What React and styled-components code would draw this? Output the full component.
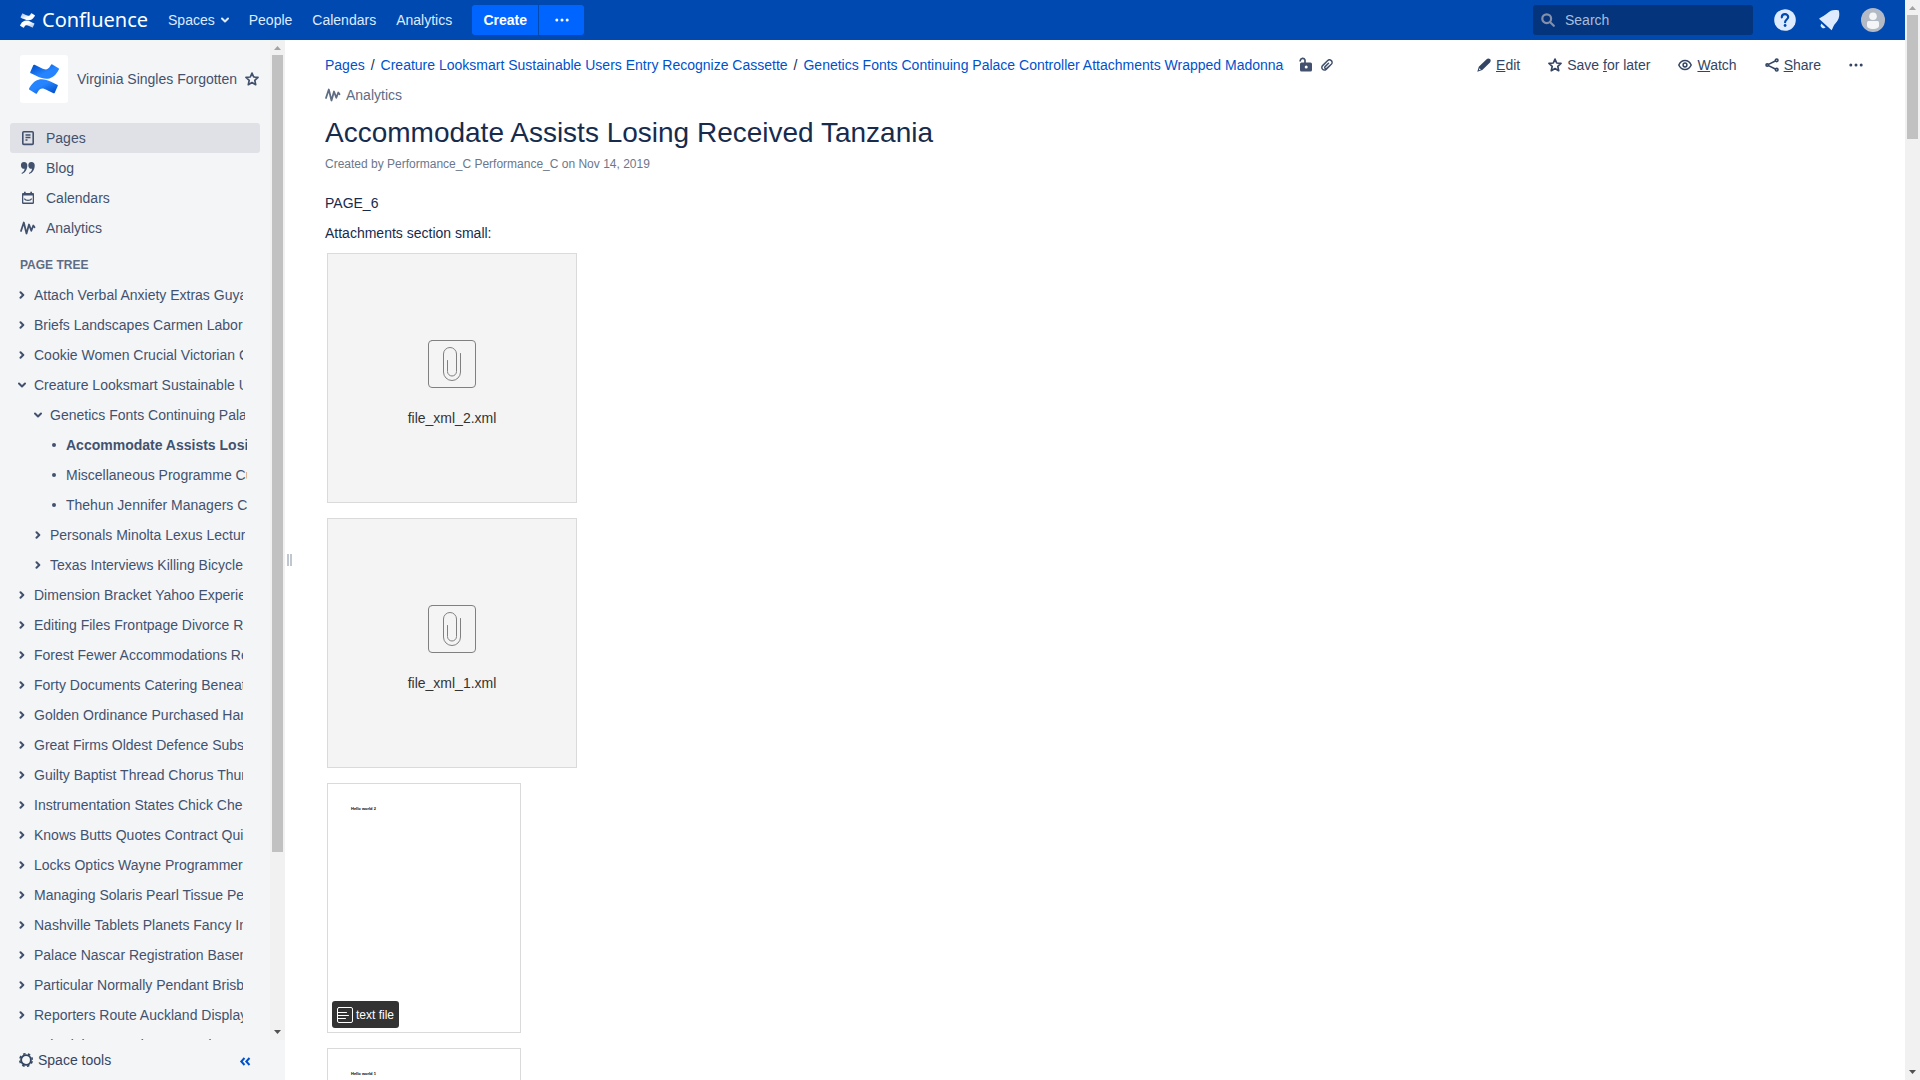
import React from "react";
import styled, { createGlobalStyle } from "styled-components";

const GlobalStyle = createGlobalStyle`
  *, *::before, *::after { box-sizing: border-box; }
  body {
    margin: 0;
    overflow: hidden;
    background: #fff;
    color: #172b4d;
    font: 14px/20px "Liberation Sans", Arial, sans-serif;
  }
  h1, h2, p, ul { margin: 0; padding: 0; }
  ul { list-style: none; }
  a { color: inherit; text-decoration: none; }
  button, input { font: inherit; }
  button { border: 0; padding: 0; background: none; color: inherit; cursor: pointer; }
  svg { display: block; flex: none; }
`;

/* ---------- shell ---------- */

const Viewport = styled.div`
  display: flex;
  height: 100vh;
`;

const Page = styled.div`
  flex: 1;
  min-width: 0;
  display: flex;
  flex-direction: column;
`;

const Body = styled.div`
  flex: 1;
  min-height: 0;
  display: flex;
`;

/* ---------- scrollbar ---------- */

const Track = styled.div`
  flex: none;
  display: flex;
  flex-direction: column;
  align-items: center;
  width: 15px;
  background: #f1f1f1;
`;

const Thumb = styled.div`
  width: 11px;
  flex: 0 0 ${(p) => p.$size};
  background: #c1c1c1;
`;

const TrackSpace = styled.div`
  flex: 1;
`;

const Arrow = ({ down }) => (
  <svg width="15" height="15" viewBox="0 0 15 15">
    <path d={down ? "M4 5h7L7.500 9z" : "M4 10h7L7.500 6z"} fill={down ? "#505050" : "#a3a3a3"} />
  </svg>
);

const Scrollbar = ({ size }) => (
  <Track aria-hidden="true">
    <Arrow />
    <Thumb $size={size} />
    <TrackSpace />
    <Arrow down />
  </Track>
);

/* ---------- header ---------- */

const Header = styled.header`
  flex: none;
  display: flex;
  align-items: center;
  justify-content: space-between;
  height: 40px;
  padding: 0 20px;
  background: #0049b0;
  color: #deebff;
`;

const HeaderGroup = styled.div`
  display: flex;
  align-items: center;
  gap: 20px;
`;

const Brand = styled.a`
  display: flex;
  align-items: center;
  gap: 7px;
  color: #fff;
  font: 20px/30px "Noto Sans", "Open Sans", sans-serif;
`;

const NavLink = styled.a`
  display: flex;
  align-items: center;
  gap: 6px;
`;

const CreateGroup = styled.div`
  display: flex;
  gap: 1px;
`;

const CreateButton = styled.button`
  display: flex;
  align-items: center;
  justify-content: center;
  width: ${(p) => (p.$more ? "45px" : "66px")};
  height: 30px;
  border-radius: ${(p) => (p.$more ? "0 3px 3px 0" : "3px 0 0 3px")};
  background: #0065ff;
  color: #fff;
  font-weight: bold;
`;

const SearchBox = styled.label`
  display: flex;
  align-items: center;
  gap: 10px;
  width: 220px;
  height: 30px;
  padding: 0 8px;
  border-radius: 3px;
  background: #04347c;
  color: #8590a8;
`;

const SearchInput = styled.input`
  flex: 1;
  min-width: 0;
  padding: 0;
  border: 0;
  outline: 0;
  background: none;
  color: #deebff;
  &::placeholder { color: #a9bddb; opacity: 1; }
`;

const IconButton = styled.button`
  display: flex;
  align-items: center;
  justify-content: center;
  width: 24px;
  height: 24px;
`;

/* ---------- sidebar ---------- */

const Sidebar = styled.aside`
  flex: none;
  display: flex;
  flex-direction: column;
  width: 285px;
  background: #f4f5f7;
  color: #42526e;
`;

const SidebarScroll = styled.div`
  flex: 1;
  min-height: 0;
  display: flex;
`;

const SidebarContent = styled.div`
  flex: 1;
  min-width: 0;
  overflow: hidden;
`;

const Space = styled.div`
  display: flex;
  align-items: center;
  padding: 15px 11px 20px 20px;
`;

const SpaceLogo = styled.a`
  display: flex;
  align-items: center;
  justify-content: center;
  width: 48px;
  height: 48px;
  margin-right: 9px;
  border-radius: 3px;
  background: #fff;
`;

const SpaceName = styled.a`
  flex: 1;
  white-space: nowrap;
`;

const SideNav = styled.ul`
  padding: 0 10px;
`;

const SideLink = styled.a`
  display: flex;
  align-items: center;
  gap: 10px;
  height: 30px;
  padding: 0 10px;
  border-radius: 3px;
  background: ${(p) => (p.$active ? "#dfe1e6" : "transparent")};
`;

const TreeTitle = styled.h2`
  padding: 8px 20px 0;
  color: #5e6c84;
  font-size: 12px;
  line-height: 29px;
  text-transform: uppercase;
`;

const TreeRow = styled.li`
  display: flex;
  align-items: center;
  gap: 6px;
  height: 30px;
  padding-left: ${(p) => 16 + p.$level * 16}px;
  padding-right: ${(p) => 27 - p.$level * 2}px;
`;

const Toggle = styled.button`
  flex: none;
  display: flex;
  justify-content: center;
  width: 12px;
`;

const Bullet = styled.span`
  flex: none;
  width: 4px;
  height: 4px;
  margin: 0 4px;
  border-radius: 2px;
  background: #42526e;
`;

const TreeLink = styled.a`
  min-width: 0;
  overflow: hidden;
  white-space: nowrap;
  font-weight: ${(p) => (p.$current ? "bold" : "normal")};
`;

const SidebarFooter = styled.div`
  flex: none;
  display: flex;
  align-items: center;
  justify-content: space-between;
  height: 40px;
  padding: 0 34px 0 19px;
`;

const FooterButton = styled.button`
  display: flex;
  align-items: center;
  gap: 5px;
  color: ${(p) => (p.$accent ? "#0052cc" : "#344563")};
`;

const Splitter = styled.div`
  flex: none;
  display: flex;
  align-items: center;
  justify-content: center;
  width: 8px;
`;

const Grip = styled.div`
  width: 5px;
  height: 12px;
  border: solid #c1c7d0;
  border-width: 0 2px;
`;

/* ---------- content ---------- */

const Main = styled.main`
  flex: 1;
  min-width: 0;
  overflow: hidden;
  padding: 10px 42px 0 32px;
`;

const TopRow = styled.div`
  display: flex;
  justify-content: space-between;
`;

const Meta = styled.div`
  display: flex;
  align-items: center;
  height: 30px;
`;

const Crumbs = styled.nav`
  display: flex;
  gap: 6px;
  margin-right: 16px;
  color: #172b4d;
  a { color: #0052cc; }
`;

const MetaIcons = styled.div`
  display: flex;
  align-items: center;
  gap: 8px;
  color: #42526e;
`;

const AnalyticsLink = styled.a`
  display: flex;
  align-items: center;
  gap: 5px;
  height: 30px;
  color: #5e6c84;
`;

const Toolbar = styled.div`
  display: flex;
  align-items: center;
  gap: 28px;
  height: 30px;
  color: #344563;
`;

const ToolButton = styled.button`
  display: flex;
  align-items: center;
  gap: 5px;
`;

const Title = styled.h1`
  margin-top: 7px;
  font-size: 28px;
  font-weight: normal;
  line-height: 32px;
`;

const Byline = styled.p`
  margin: 5px 0 19px;
  color: #6b778c;
  font-size: 12px;
`;

const Paragraph = styled.p`
  margin-bottom: 10px;
`;

const Files = styled.div`
  display: flex;
  flex-direction: column;
  align-items: flex-start;
  gap: 15px;
  padding-left: 2px;
`;

const FileCard = styled.a`
  flex: none;
  display: flex;
  flex-direction: column;
  align-items: center;
  gap: 20px;
  width: 250px;
  height: 250px;
  padding-top: 86px;
  border: 1px solid #dadada;
  background: #f4f4f4;
  color: #333;
`;

const PreviewCard = styled.a`
  flex: none;
  display: flex;
  flex-direction: column;
  align-items: flex-start;
  justify-content: space-between;
  width: 194px;
  height: 250px;
  padding: 22px 4px 4px;
  border: 1px solid #dadada;
  background: #fff;
`;

const PreviewText = styled.span`
  padding-left: 19px;
  color: #000;
  font-size: 4px;
  font-weight: bold;
  line-height: 5px;
`;

const FileBadge = styled.span`
  display: flex;
  align-items: center;
  gap: 3px;
  height: 27px;
  padding: 0 5px;
  border-radius: 3px;
  background: #333;
  color: #fff;
  font-size: 12px;
`;

/* ---------- icons ---------- */

const RIBBON_LOW =
  "M.87 18.257c-.248.382-.53.875-.763 1.245a.764.764 0 0 0 .255 1.04l4.965 3.054a.764.764 0 0 0 1.058-.26c.199-.332.454-.763.733-1.221 1.967-3.247 3.945-2.853 7.508-1.146l4.957 2.337a.764.764 0 0 0 1.028-.382l2.364-5.346a.764.764 0 0 0-.382-1 599.851 599.851 0 0 1-4.965-2.361C10.911 10.97 5.224 11.185.87 18.257z";
const RIBBON_HIGH =
  "M23.131 5.743c.249-.405.531-.875.764-1.25a.764.764 0 0 0-.256-1.034L18.675.404a.764.764 0 0 0-1.058.26c-.195.335-.451.763-.734 1.225-1.966 3.246-3.945 2.85-7.508 1.146L4.437.694a.764.764 0 0 0-1.027.382L1.046 6.422a.764.764 0 0 0 .382 1c1.039.49 3.105 1.467 4.965 2.361 6.698 3.246 12.392 3.029 16.738-4.04z";

const ConfluenceMark = ({ size, id, from, to }) => (
  <svg width={size} height={size} viewBox="0 0 24 24">
    <defs>
      <linearGradient id={`${id}-low`} x1="1" y1="1" x2="0.2" y2="0.2">
        <stop offset="0.100" stopColor={from} />
        <stop offset="0.700" stopColor={to} />
      </linearGradient>
      <linearGradient id={`${id}-high`} x1="0" y1="0" x2="0.8" y2="0.8">
        <stop offset="0.100" stopColor={from} />
        <stop offset="0.700" stopColor={to} />
      </linearGradient>
    </defs>
    <path d={RIBBON_LOW} fill={`url(#${id}-low)`} />
    <path d={RIBBON_HIGH} fill={`url(#${id}-high)`} />
  </svg>
);

const Line = ({ w = 16, h = 16, sw = 2, children, ...rest }) => (
  <svg
    width={w}
    height={h}
    viewBox={`0 0 ${w} ${h}`}
    fill="none"
    stroke="currentColor"
    strokeWidth={sw}
    strokeLinecap="round"
    strokeLinejoin="round"
    {...rest}
  >
    {children}
  </svg>
);

const ChevronDown = () => (
  <Line w={8} h={8}><path d="M1 2.500 4 5.500 7 2.500" /></Line>
);
const ChevronRight = () => (
  <Line w={8} h={8}><path d="M2.500 1.200 5.300 4 2.500 6.800" /></Line>
);
const Dots = ({ w = 14, r = 1.5 }) => (
  <svg width={w} height="4" viewBox={`0 0 ${w} 4`} fill="currentColor">
    <circle cx={r + 0.3} cy="2" r={r} />
    <circle cx={w / 2} cy="2" r={r} />
    <circle cx={w - r - 0.3} cy="2" r={r} />
  </svg>
);
const Star = ({ size = 14 }) => (
  <svg width={size} height={size} viewBox="0 0 14 14" fill="none" stroke="currentColor" strokeWidth="1.700" strokeLinejoin="round">
    <path d="M7 1.100 8.700 5l4.300.4-3.200 2.900.9 4.400L7 10.500l-3.700 2.200.9-4.400L1 5.400 5.300 5z" />
  </svg>
);
const Pulse = ({ w = 16 }) => (
  <Line w={w} h={14} sw={1.8}><path d="M1 10 3.800 1.500 6.500 12.500 9 3.500l2.300 6.300 2-5.300 1.200 1.700" /></Line>
);
const SearchIcon = () => (
  <Line w={14} h={14} sw={2.2}><circle cx="5.700" cy="5.700" r="4.400" /><path d="m9.200 9.200 3.600 3.600" /></Line>
);
const HelpIcon = () => (
  <svg width="22" height="22" viewBox="0 0 22 22" fill="none">
    <circle cx="11" cy="11" r="10.800" fill="#deebff" />
    <path d="M7.800 8.300C7.900 6.300 9.200 5.200 11 5.200s3.200 1.100 3.200 2.900c0 2.300-3.100 2.500-3.100 5.100" stroke="#0049b0" strokeWidth="2.200" strokeLinecap="round" />
    <circle cx="11.100" cy="16.500" r="1.400" fill="#0049b0" />
  </svg>
);
const BellIcon = () => (
  <svg width="22" height="22" viewBox="0 0 22 22" fill="#deebff">
    <path d="M1 9.800C3 8 7 6.600 9.300 4.300 11.800 1.600 15 .5 18.800 1L20.900 1.600 21.300 4.500c.2 3.400-.8 6.800-3.500 9.400-2.400 2.400-3 5.300-4.200 7.300z" />
    <path d="M3.300 14.500 7.600 18.600A3 3 0 0 1 3.300 14.500z" />
  </svg>
);
const AvatarIcon = () => (
  <svg width="24" height="24" viewBox="0 0 24 24">
    <circle cx="12" cy="12" r="12" fill="#b3bac5" />
    <circle cx="12" cy="8.300" r="3.800" fill="#f4f5f7" />
    <path d="M6 14.500A1.500 1.500 0 0 1 7.500 13h9a1.500 1.500 0 0 1 1.500 1.500v3.300c0 2-2.600 3.200-6 3.200s-6-1.200-6-3.200z" fill="#f4f5f7" />
  </svg>
);
const PageIcon = () => (
  <Line sw={1.6} h={16}><rect x="2.800" y="1.800" width="10.400" height="12.600" rx="1" /><path d="M5.500 5h5M5.500 7.500h5M5.500 10h2" strokeWidth="1.300" strokeLinecap="butt" /></Line>
);
const QuoteIcon = () => (
  <svg width="16" height="16" viewBox="0 0 16 16" fill="currentColor">
    <path d="M4 2a3.200 3.200 0 0 1 3.300 3.600C7.300 9.500 5.300 12.800 2 14l-.5-1c2-.9 3-2.600 3.100-4.300A3.300 3.300 0 1 1 4 2z" />
    <path d="M11.400 2a3.200 3.200 0 0 1 3.300 3.600c0 3.900-2 7.200-5.300 8.400l-.5-1c2-.9 3-2.600 3.100-4.300A3.300 3.300 0 1 1 11.400 2z" />
  </svg>
);
const CalendarIcon = () => (
  <svg width="16" height="16" viewBox="0 0 16 16">
    <path d="M2 4.200C2 3.300 2.500 3 3 3h1V1.800h1.700V3h4.600V1.800H12V3h1c.6 0 1 .4 1 1.200v8.600c0 .7-.4 1.200-1 1.200H3c-.6 0-1-.5-1-1.200zM3.300 5.600v7h9.400v-7z" fill="currentColor" fillRule="evenodd" />
    <path d="M4.300 8.600c1.400 2.400 6 2.400 7.400 0" fill="none" stroke="currentColor" strokeWidth="1.200" />
  </svg>
);
const GearIcon = () => (
  <svg width="14" height="14" viewBox="0 0 14 14" fill="none" stroke="currentColor">
    <circle cx="7" cy="7" r="4.900" strokeWidth="1.900" />
    <circle cx="7" cy="7" r="6.300" strokeWidth="1.500" strokeDasharray="2.500 2.448" strokeDashoffset="-1.200" />
  </svg>
);
const CollapseIcon = () => (
  <Line w={12} h={12} sw={2} strokeLinecap="butt" strokeLinejoin="miter"><path d="M5.500 4 2.300 7.500 5.500 11M10.500 4 7.300 7.500 10.500 11" /></Line>
);
const LockIcon = () => (
  <svg width="14" height="16" viewBox="0 0 14 16">
    <path d="M1.200 4.500V3.600A2.500 2.500 0 0 1 6 3V6" fill="none" stroke="currentColor" strokeWidth="1.700" />
    <path d="M2.500 5.500h9A1.500 1.500 0 0 1 13 7v6a1.500 1.500 0 0 1-1.500 1.500h-9A1.500 1.500 0 0 1 1 13V7A1.500 1.500 0 0 1 2.500 5.500zM7.200 8.500a1.500 1.500 0 1 0 0 3 1.500 1.500 0 0 0 0-3z" fill="currentColor" fillRule="evenodd" />
  </svg>
);
const ClipIcon = () => (
  <Line w={12} h={12} sw={1.5}><path d="m9.300 6.200-4.200 4.200a2.400 2.400 0 0 1-3.500-.1C.5 9.200.6 7.600 1.600 6.600L6.500 1.700c1.100-1.100 2.700-1.200 3.800-.1 1.100 1.100 1 2.700 0 3.700L5.800 9.200c-.6.600-1.400.5-1.800.1s-.4-1.200.1-1.700L7.500 4.300" /></Line>
);
const PencilIcon = () => (
  <svg width="14" height="14" viewBox="0 0 14 14" fill="currentColor">
    <path d="M9.600 1.200C10.500.2 12 .2 13 1.100s.9 2.300 0 3.300l-7.700 7.700L.3 13.700l1.500-4.900zM2.500 10.200l-.7 2.100 2.100-.7z" fillRule="evenodd" />
  </svg>
);
const EyeIcon = () => (
  <Line w={14} h={14} sw={1.5}><path d="M.8 7c2.700-6 9.700-6 12.400 0-2.700 6-9.700 6-12.400 0z" /><circle cx="7" cy="7" r="1.900" /></Line>
);
const ShareIcon = () => (
  <Line w={14} h={14} sw={1.6}><circle cx="2.200" cy="7" r="1.200" /><circle cx="11.700" cy="2.300" r="1.300" /><circle cx="11.700" cy="11.700" r="1.300" /><path d="M3.500 6.400 10.300 3M3.500 7.600l6.800 3.400" /></Line>
);
const AttachmentIcon = () => (
  <Line w={48} h={48} sw={1} stroke="#808080">
    <rect x="0.500" y="0.500" width="47" height="47" rx="3.500" />
    <path d="M32.500 13.500v18.500a8.500 8.500 0 0 1-17 0V14a6.500 6.500 0 0 1 13 0v17.500a4.500 4.500 0 0 1-9 0V20.500" />
  </Line>
);
const TextFileIcon = () => (
  <Line w={16} h={16} sw={1} stroke="#fff"><rect x="0.500" y="0.500" width="15" height="15" rx="1.500" /><path d="M1 5.500h8.500M1 8.500h10.500M1 11.500h7.500" /></Line>
);

/* ---------- data ---------- */

const sideLinks = [
  { label: "Pages", icon: <PageIcon />, active: true },
  { label: "Blog", icon: <QuoteIcon /> },
  { label: "Calendars", icon: <CalendarIcon /> },
  { label: "Analytics", icon: <Pulse /> },
];

const tree = [
  ["Attach Verbal Anxiety Extras Guyana"],
  ["Briefs Landscapes Carmen Labor"],
  ["Cookie Women Crucial Victorian Cups"],
  ["Creature Looksmart Sustainable Users Entry Recognize Cassette", 0, "open"],
  ["Genetics Fonts Continuing Palace Controller Attachments Wrapped Madonna", 1, "open"],
  ["Accommodate Assists Losing Received Tanzania", 2, "current"],
  ["Miscellaneous Programme Cups", 2, "leaf"],
  ["Thehun Jennifer Managers Carmen", 2, "leaf"],
  ["Personals Minolta Lexus Lecture", 1],
  ["Texas Interviews Killing Bicycle", 1],
  ["Dimension Bracket Yahoo Experience"],
  ["Editing Files Frontpage Divorce R"],
  ["Forest Fewer Accommodations Report"],
  ["Forty Documents Catering Beneath"],
  ["Golden Ordinance Purchased Harry"],
  ["Great Firms Oldest Defence Subs"],
  ["Guilty Baptist Thread Chorus Thunder"],
  ["Instrumentation States Chick Che"],
  ["Knows Butts Quotes Contract Qui"],
  ["Locks Optics Wayne Programmer"],
  ["Managing Solaris Pearl Tissue Pe"],
  ["Nashville Tablets Planets Fancy Inn"],
  ["Palace Nascar Registration Basement"],
  ["Particular Normally Pendant Brisb"],
  ["Reporters Route Auckland Display"],
  ["Schedules Speed Pressured"],
];

const TreeItem = ({ label, level = 0, kind }) => (
  <TreeRow $level={level}>
    {kind === "leaf" || kind === "current" ? (
      <Bullet />
    ) : (
      <Toggle aria-label={kind === "open" ? "Collapse" : "Expand"}>
        {kind === "open" ? <ChevronDown /> : <ChevronRight />}
      </Toggle>
    )}
    <TreeLink href="#" $current={kind === "current"}>{label}</TreeLink>
  </TreeRow>
);

export default function App() {
  return (
    <Viewport>
      <GlobalStyle />
      <Page>
        <Header>
          <HeaderGroup>
            <Brand href="#">
              <ConfluenceMark size={15} id="brand" from="#a9c4ea" to="#ffffff" />
              Confluence
            </Brand>
            <NavLink href="#">Spaces <ChevronDown /></NavLink>
            <NavLink href="#">People</NavLink>
            <NavLink href="#">Calendars</NavLink>
            <NavLink href="#">Analytics</NavLink>
            <CreateGroup>
              <CreateButton>Create</CreateButton>
              <CreateButton $more aria-label="Create from template"><Dots /></CreateButton>
            </CreateGroup>
          </HeaderGroup>
          <HeaderGroup>
            <SearchBox>
              <SearchIcon />
              <SearchInput type="text" placeholder="Search" aria-label="Search" />
            </SearchBox>
            <IconButton aria-label="Help"><HelpIcon /></IconButton>
            <IconButton aria-label="Notifications"><BellIcon /></IconButton>
            <IconButton aria-label="Profile"><AvatarIcon /></IconButton>
          </HeaderGroup>
        </Header>

        <Body>
          <Sidebar>
            <SidebarScroll>
              <SidebarContent>
                <Space>
                  <SpaceLogo href="#" aria-label="Space home">
                    <ConfluenceMark size={30} id="space" from="#0052cc" to="#2684ff" />
                  </SpaceLogo>
                  <SpaceName href="#">Virginia Singles Forgotten</SpaceName>
                  <Star />
                </Space>
                <SideNav>
                  {sideLinks.map((s) => (
                    <li key={s.label}>
                      <SideLink href="#" $active={s.active}>{s.icon}{s.label}</SideLink>
                    </li>
                  ))}
                </SideNav>
                <TreeTitle>Page tree</TreeTitle>
                <ul>
                  {tree.map(([label, level, kind]) => (
                    <TreeItem key={label} label={label} level={level} kind={kind} />
                  ))}
                </ul>
              </SidebarContent>
              <Scrollbar size="797px" />
            </SidebarScroll>
            <SidebarFooter>
              <FooterButton><GearIcon />Space tools</FooterButton>
              <FooterButton $accent aria-label="Collapse sidebar"><CollapseIcon /></FooterButton>
            </SidebarFooter>
          </Sidebar>
          <Splitter><Grip /></Splitter>

          <Main>
            <TopRow>
              <Meta>
                <Crumbs aria-label="Breadcrumb">
                  <a href="#">Pages</a>
                  <span>/</span>
                  <a href="#">Creature Looksmart Sustainable Users Entry Recognize Cassette</a>
                  <span>/</span>
                  <a href="#">Genetics Fonts Continuing Palace Controller Attachments Wrapped Madonna</a>
                </Crumbs>
                <MetaIcons><LockIcon /><ClipIcon /></MetaIcons>
              </Meta>
              <Toolbar>
                <ToolButton><PencilIcon /><span><u>E</u>dit</span></ToolButton>
                <ToolButton><Star /><span>Save <u>f</u>or later</span></ToolButton>
                <ToolButton><EyeIcon /><span><u>W</u>atch</span></ToolButton>
                <ToolButton><ShareIcon /><span><u>S</u>hare</span></ToolButton>
                <ToolButton aria-label="More actions"><Dots /></ToolButton>
              </Toolbar>
            </TopRow>
            <AnalyticsLink href="#"><Pulse />Analytics</AnalyticsLink>
            <Title>Accommodate Assists Losing Received Tanzania</Title>
            <Byline>Created by Performance_C Performance_C on Nov 14, 2019</Byline>
            <Paragraph>PAGE_6</Paragraph>
            <Paragraph>Attachments section small:</Paragraph>
            <Files>
              <FileCard href="#"><AttachmentIcon /><span>file_xml_2.xml</span></FileCard>
              <FileCard href="#"><AttachmentIcon /><span>file_xml_1.xml</span></FileCard>
              <PreviewCard href="#">
                <PreviewText>Hello world 2</PreviewText>
                <FileBadge><TextFileIcon />text file</FileBadge>
              </PreviewCard>
              <PreviewCard href="#">
                <PreviewText>Hello world 1</PreviewText>
                <FileBadge><TextFileIcon />text file</FileBadge>
              </PreviewCard>
            </Files>
          </Main>
        </Body>
      </Page>
      <Scrollbar size="124px" />
    </Viewport>
  );
}
